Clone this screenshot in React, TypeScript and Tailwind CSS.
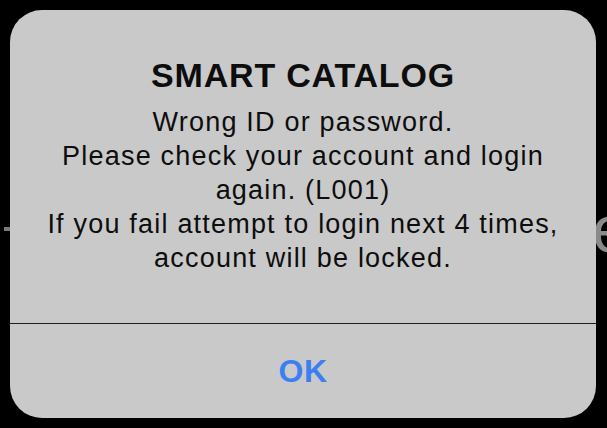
export default function App() {
  return (
    <div
      className="relative w-[607px] h-[428px] bg-black overflow-hidden"
      style={{ fontFamily: '"Liberation Sans", Arial, sans-serif' }}
    >
      <div className="absolute left-[4px] top-[227px] w-[6px] h-[4px] bg-[#7a7a7a]" />
      <div className="absolute left-[592px] top-[196px] text-[66px] leading-none text-[#8a8a8a]">e</div>
      <div className="absolute left-[10px] top-[10px] w-[586px] h-[408px] rounded-[32px] bg-[#c9c9c9] flex flex-col">
        <div className="h-[313px] flex flex-col items-center pt-[45px] text-center text-[#0d0d0d]">
          <div className="text-[34px] leading-[40px] font-bold tracking-[0.8px]">SMART CATALOG</div>
          <div className="mt-[10px] text-[27px] leading-[34px] tracking-[1.2px] whitespace-nowrap">
            Wrong ID or password.
            <br />
            Please check your account and login
            <br />
            again. (L001)
            <br />
            If you fail attempt to login next 4 times,
            <br />
            account will be locked.
          </div>
        </div>
        <div className="h-px bg-[#1e1e1e]" />
        <div className="flex-1 flex items-center justify-center">
          <span className="text-[32px] font-bold text-[#3b80f3] leading-none tracking-[0.5px]">OK</span>
        </div>
      </div>
    </div>
  );
}
